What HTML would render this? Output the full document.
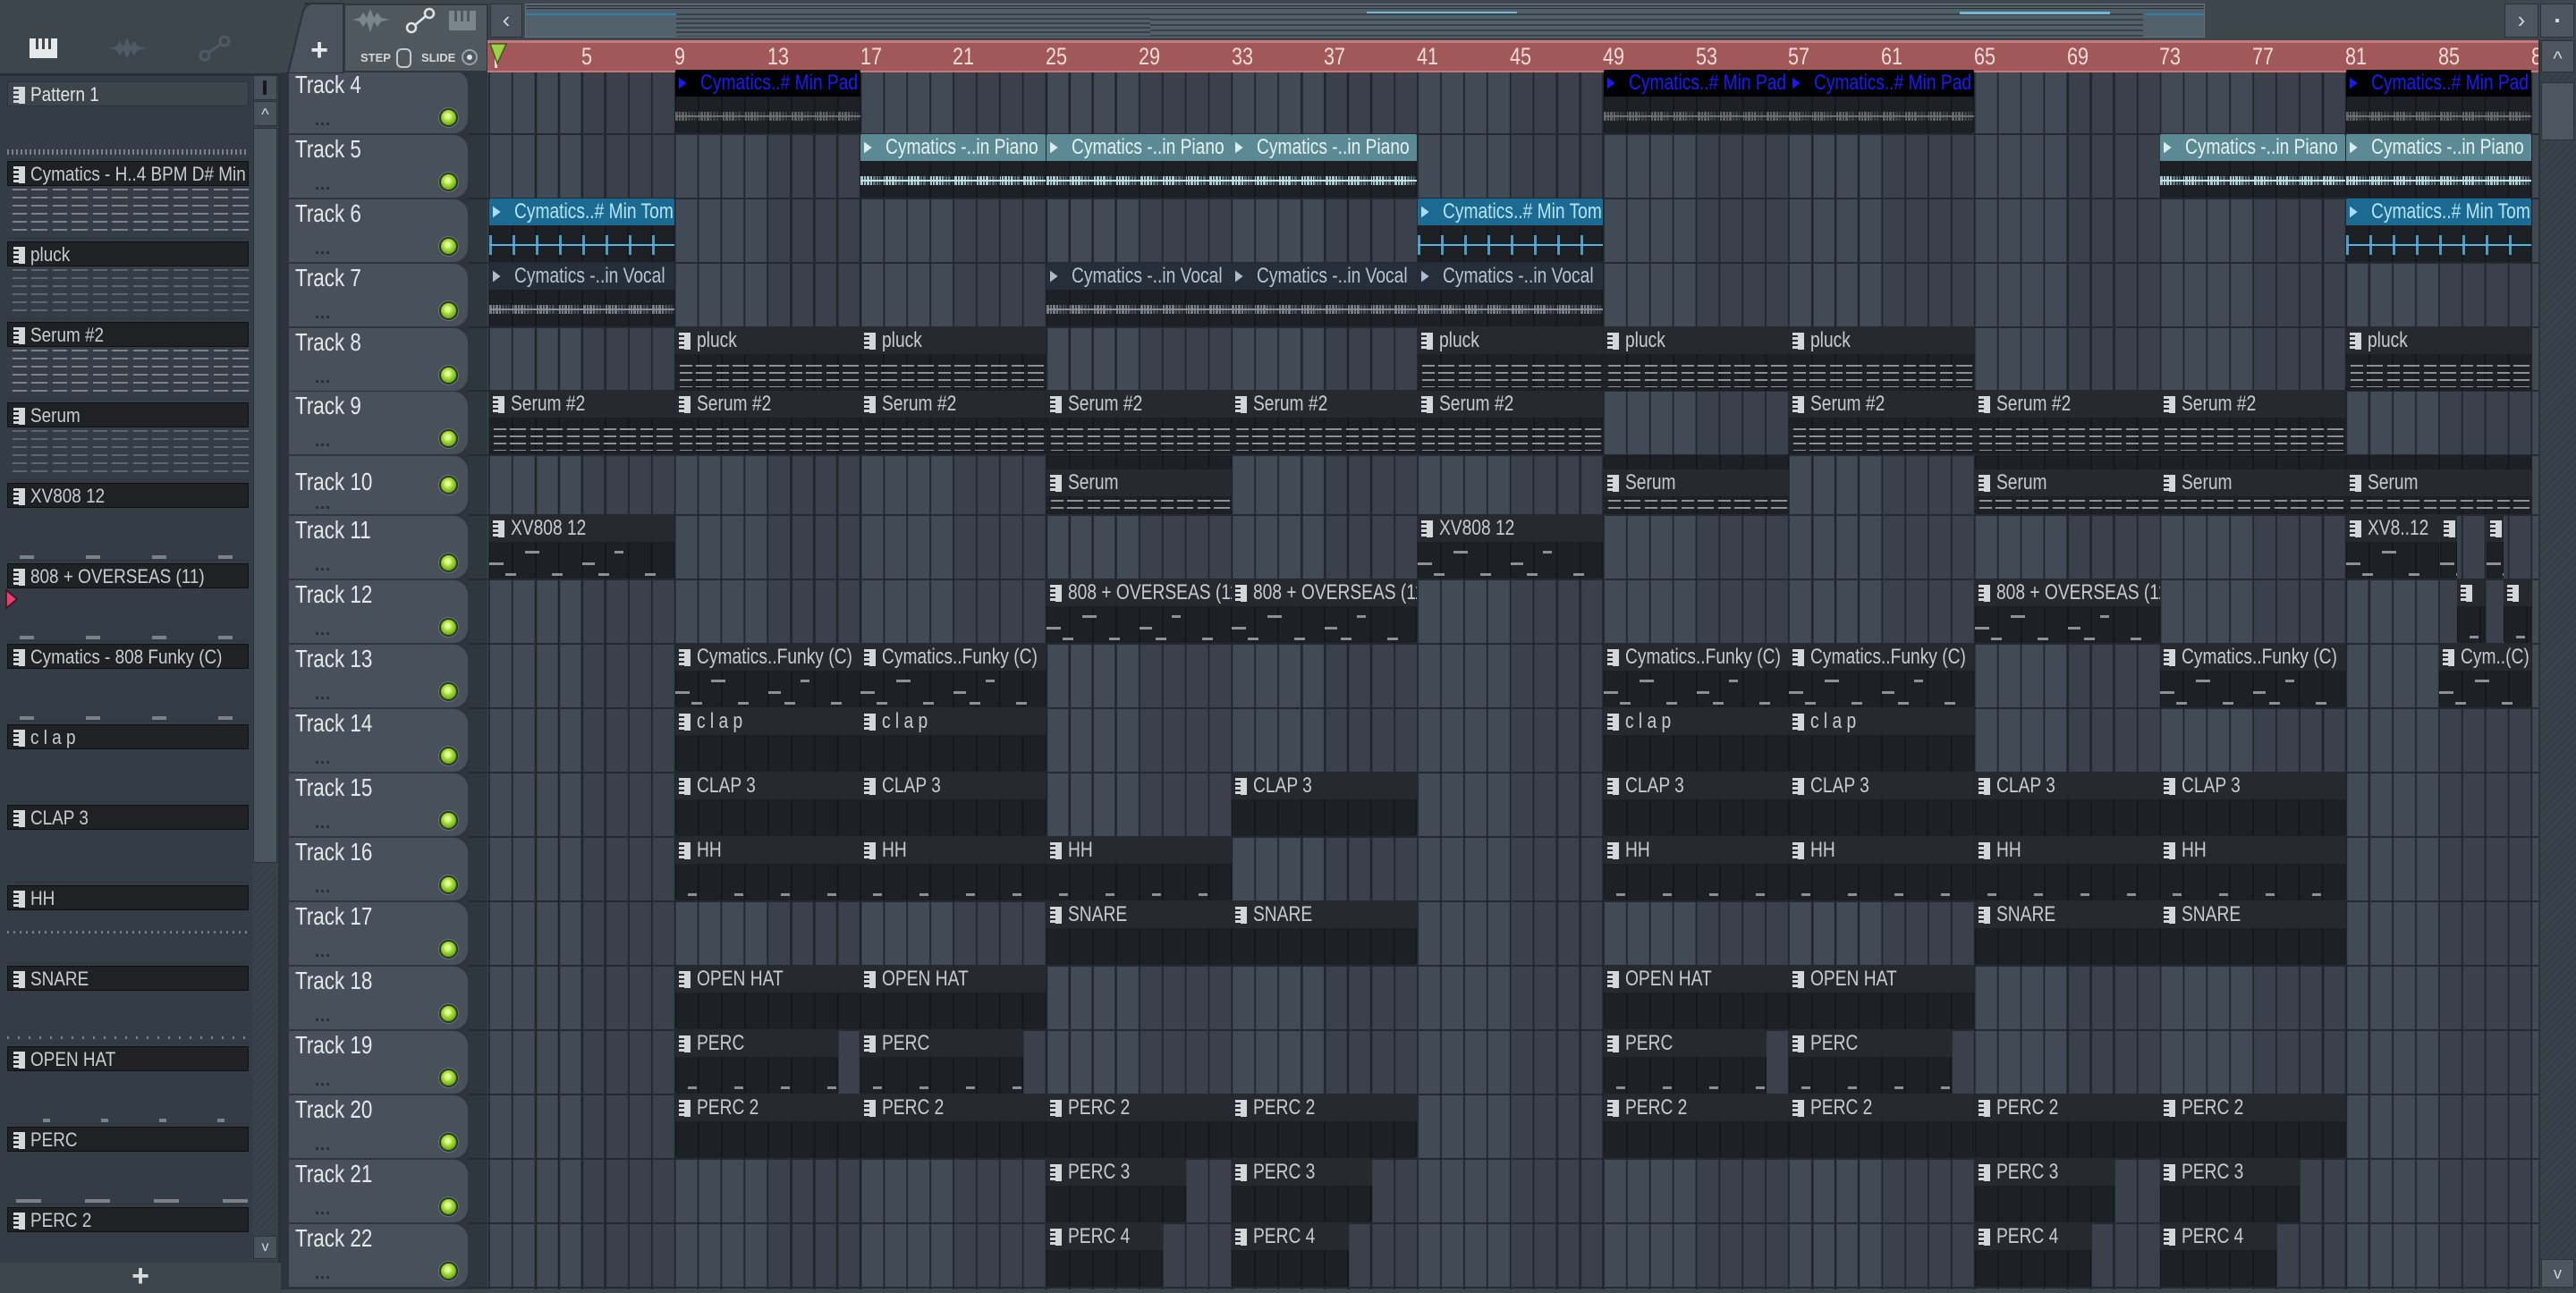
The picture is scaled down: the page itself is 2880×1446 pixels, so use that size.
<!DOCTYPE html>
<html><head><meta charset="utf-8">
<style>
*{box-sizing:border-box}
body{margin:0;width:2880px;height:1442px;background:#3e464d;overflow:hidden;position:relative;font-family:"Liberation Sans",sans-serif}
.a{position:absolute}
.t{display:inline-block;transform:scaleX(.8);transform-origin:0 50%;white-space:nowrap}
#grid{left:545px;top:81px;width:2293px;height:1361px;
background-image:repeating-linear-gradient(90deg,#20252b 0 2px,transparent 2px 25.95px),repeating-linear-gradient(90deg,#424a55 0 103.8px,#3a414b 103.8px 207.6px);
background-position:1px 0,2px 0}
.hl{position:absolute;left:523px;width:2315px;height:2px;background:#242a31}
.c{position:absolute;height:71px;overflow:hidden;border-radius:2px;background-color:#1d2025;
background-image:repeating-linear-gradient(90deg,#14171b 0 2px,transparent 2px 25.95px);background-position:-1px 0}
.c .h{position:relative;height:30px;background:#26292d;color:#c6cbd0;font-size:24px;line-height:30px;white-space:nowrap;padding-left:4px;z-index:2}
.c .h i{display:inline-block;width:13px;height:19px;vertical-align:-3px;margin-right:7px;
background:linear-gradient(90deg,transparent 0 6px,#d4d7da 6px),repeating-linear-gradient(#d4d7da 0 3px,transparent 3px 5px)}
.c .h b{display:inline-block;width:18px;height:16px;margin-right:6px;vertical-align:-1px;background:currentColor;clip-path:polygon(0 0,45% 50%,0 100%,0 60%,-1% 40%,0 0,100% 0,55% 50%,100% 100%,100% 0);
clip-path:polygon(0 10%,48% 50%,0 90%,0 55%,0 45%);opacity:.95}
.c .h b::after{content:""}
.dn::after{content:"";position:absolute;left:0;right:0;top:36px;bottom:4px;
background-image:repeating-linear-gradient(90deg,rgba(29,32,37,.95) 0 5px,transparent 5px 19px,rgba(29,32,37,.95) 19px 23px,transparent 23px 41px),repeating-linear-gradient(180deg,transparent 0 6px,#8d9094 6px 8px)}
.sp::after{content:"";position:absolute;left:0;right:0;bottom:5px;height:3px;
background-image:repeating-linear-gradient(90deg,transparent 0 14px,#8d9094 14px 24px,transparent 24px 52px)}
.sp2::after{content:"";position:absolute;left:0;right:0;top:40px;height:30px;
background:linear-gradient(90deg,transparent 0 40px,#8d9094 40px 56px,transparent 56px 140px,#8d9094 140px 150px,transparent 150px) 0 0/100% 3px no-repeat,
linear-gradient(90deg,#8d9094 0 16px,transparent 16px 104px,#8d9094 104px 118px,transparent 118px) 0 13px/100% 3px no-repeat,
repeating-linear-gradient(90deg,transparent 0 18px,#8d9094 18px 30px,transparent 30px 52px) 0 25px/100% 3px no-repeat}
.wv::after{content:"";position:absolute;left:0;right:0;top:47px;height:10px;opacity:.85;
background:repeating-linear-gradient(90deg,var(--w) 0 3px,transparent 3px 4px,var(--w) 4px 6px,transparent 6px 7px);
-webkit-mask:repeating-linear-gradient(90deg,#000 0 14px,rgba(0,0,0,.5) 14px 22px,rgba(0,0,0,.2) 22px 26px);}
.wv::before{content:"";position:absolute;left:0;right:0;top:51px;height:2px;background:var(--w)}
.pad .h{background:#000;color:#1a1aff}
.pad{--w:#6d6e70}
.pia .h{background:#5b8a95;color:#e4f2f4}
.pia{--w:#bfe3ea}
.tom .h{background:#1b6a92;color:#b4e2ff}
.tom{--w:#56b2e0}
.tom::after{height:22px;top:41px;background:repeating-linear-gradient(90deg,var(--w) 0 3px,transparent 3px 26px);-webkit-mask:none}
.voc .h{background:#262e39;color:#b6c3d0}
.voc{--w:#858d96}
.tr{position:absolute;left:323px;width:200px;height:70px;background:#48515a;border-radius:0 16px 16px 0;color:#e4e8ec;font-size:28px}
.tr .l{position:absolute;left:7px;top:0px}
.tr .led{position:absolute;left:168px;top:42px;width:21px;height:21px;border-radius:50%;background:radial-gradient(circle at 45% 40%,#e6ff9a 0 2px,#a8e03a 5px,#6aa81a 10px);border:2px solid #2a3a20;box-shadow:0 0 0 1px #6b7580}
.tr .d{position:absolute;left:30px;top:58px;width:16px;height:3px;background:repeating-linear-gradient(90deg,#2a3037 0 3px,transparent 3px 6px)}
.lp{position:absolute;left:8px;width:270px;height:28px;background:#1f2124;border:1px solid #0f1012;color:#c8ccd0;font-size:22px;line-height:27px;white-space:nowrap;overflow:hidden;padding-left:6px}
.lp .t{transform:scaleX(.86)}
.lp i{display:inline-block;width:13px;height:19px;vertical-align:-3px;margin-right:6px;background:linear-gradient(90deg,transparent 0 6px,#d4d7da 6px),repeating-linear-gradient(#d4d7da 0 3px,transparent 3px 5px)}
.pv{position:absolute;left:8px;width:270px;height:58px;border-bottom:1px solid #2c343c;
background-image:repeating-linear-gradient(90deg,transparent 0 14px,#7d8186 14px 30px,transparent 30px 74px);background-size:100% 4px;background-repeat:no-repeat;background-position:0 52px}
.pvd{background-image:repeating-linear-gradient(90deg,rgba(52,60,69,.95) 0 6px,transparent 6px 22px,rgba(52,60,69,.95) 22px 27px,transparent 27px 45px),repeating-linear-gradient(180deg,transparent 0 7px,#7d8186 7px 9px)!important;background-size:auto!important;background-repeat:repeat!important}
.rn{position:absolute;top:44px;color:#f4dad4;font-size:27px;line-height:38px}
</style></head><body>

<!-- left panel -->
<div class="a" style="left:0;top:82px;width:314px;height:1330px;background:#343c45;border-top:3px solid #283037;border-right:3px solid #283037"></div>
<div class="a" style="left:0;top:1412px;width:314px;height:30px;background:#3e464d;color:#d8dcdf;font-size:34px;line-height:30px;text-align:center;font-weight:bold">+</div>
<!-- top-left icons -->
<div class="a" style="left:33px;top:43px;width:31px;height:22px;background:#e6e8ea"></div>
<div class="a" style="left:40px;top:43px;width:3px;height:12px;background:#3e464d"></div>
<div class="a" style="left:47px;top:43px;width:3px;height:12px;background:#3e464d"></div>
<div class="a" style="left:54px;top:43px;width:3px;height:12px;background:#3e464d"></div>
<svg class="a" style="left:120px;top:38px" width="46" height="32"><path d="M2 16 L10 14 L14 8 L18 14 L22 4 L26 14 L30 8 L34 14 L44 16 L34 18 L30 24 L26 18 L22 28 L18 18 L14 24 L10 18 Z" fill="#4f5a62"/></svg>
<svg class="a" style="left:220px;top:38px" width="40" height="32"><circle cx="9" cy="24" r="5" fill="none" stroke="#4f5a62" stroke-width="3"/><circle cx="31" cy="8" r="5" fill="none" stroke="#4f5a62" stroke-width="3"/><line x1="13" y1="21" x2="27" y2="11" stroke="#4f5a62" stroke-width="3"/></svg>

<!-- pattern list -->
<div class="lp" style="top:91px;background:#3c444c;border-color:#2c333a;color:#e0e4e8"><i></i><span class="t">Pattern 1</span></div>
<div class="pv" style="top:120px;background-image:repeating-linear-gradient(90deg,#7d8186 0 2px,transparent 2px 5px);background-size:100% 6px;background-position:0 47px"></div>
<div class="lp" style="top:180px"><i></i><span class="t">Cymatics - H..4 BPM D# Min</span></div>
<div class="pv pvd" style="top:209px"></div>
<div class="lp" style="top:270px"><i></i><span class="t">pluck</span></div>
<div class="pv pvd" style="top:299px;opacity:.6"></div>
<div class="lp" style="top:360px"><i></i><span class="t">Serum #2</span></div>
<div class="pv pvd" style="top:389px"></div>
<div class="lp" style="top:450px"><i></i><span class="t">Serum</span></div>
<div class="pv pvd" style="top:479px;opacity:.6"></div>
<div class="lp" style="top:540px"><i></i><span class="t">XV808 12</span></div>
<div class="pv" style="top:569px"></div>
<div class="lp" style="top:630px"><i></i><span class="t">808 + OVERSEAS (11)</span></div>
<div class="pv" style="top:659px"></div>
<svg class="a" style="left:5px;top:658px" width="16" height="24"><path d="M2 2 L14 12 L2 22 Z" fill="#e8406a" stroke="#3a1020" stroke-width="1.5"/></svg>
<div class="lp" style="top:720px"><i></i><span class="t">Cymatics - 808 Funky (C)</span></div>
<div class="pv" style="top:749px"></div>
<div class="lp" style="top:810px"><i></i><span class="t">c l a p</span></div>
<div class="pv" style="top:839px;background-position:0 200px"></div>
<div class="lp" style="top:900px"><i></i><span class="t">CLAP 3</span></div>
<div class="pv" style="top:929px;background-position:0 200px"></div>
<div class="lp" style="top:990px"><i></i><span class="t">HH</span></div>
<div class="pv" style="top:1019px;background-image:repeating-linear-gradient(90deg,#7d8186 0 2px,transparent 2px 7px);background-size:100% 3px;background-position:0 22px"></div>
<div class="lp" style="top:1080px"><i></i><span class="t">SNARE</span></div>
<div class="pv" style="top:1109px;background-image:repeating-linear-gradient(90deg,#7d8186 0 2px,transparent 2px 12px);background-size:100% 3px;background-position:0 50px"></div>
<div class="lp" style="top:1170px"><i></i><span class="t">OPEN HAT</span></div>
<div class="pv" style="top:1199px;background-image:repeating-linear-gradient(90deg,transparent 0 40px,#7d8186 40px 48px,transparent 48px 65px)"></div>
<div class="lp" style="top:1260px"><i></i><span class="t">PERC</span></div>
<div class="pv" style="top:1289px;background-image:repeating-linear-gradient(90deg,transparent 0 10px,#7d8186 10px 38px,transparent 38px 77px)"></div>
<div class="lp" style="top:1350px"><i></i><span class="t">PERC 2</span></div>

<!-- left scrollbar -->
<div class="a" style="left:282px;top:85px;width:29px;height:1325px;background:repeating-linear-gradient(135deg,#3a434b 0 3px,#363e46 3px 6px)"></div>
<div class="a" style="left:283px;top:84px;width:27px;height:28px;background:#48525b;border:1px solid #2a3138"></div>
<div class="a" style="left:294px;top:90px;width:4px;height:16px;background:#15181b"></div>
<div class="a" style="left:283px;top:113px;width:27px;height:28px;background:#48525b;border:1px solid #2a3138;color:#cfd3d6;font-size:18px;text-align:center;line-height:28px">^</div>
<div class="a" style="left:283px;top:143px;width:27px;height:822px;background:#4b555e;border:1px solid #2a3138"></div>
<div class="a" style="left:283px;top:1382px;width:27px;height:26px;background:#48525b;border:1px solid #2a3138;color:#cfd3d6;font-size:16px;text-align:center;line-height:24px">v</div>

<!-- track header column background -->
<div class="a" style="left:314px;top:81px;width:231px;height:1361px;background:#2d343b"></div>
<div class="a" style="left:523px;top:81px;width:22px;height:1361px;background:#2f373e"></div>

<!-- grid -->
<div id="grid" class="a"></div>

<!-- row lines -->
<div class="hl" style="top:149px"></div><div class="hl" style="top:221px"></div><div class="hl" style="top:293px"></div>
<div class="hl" style="top:365px"></div><div class="hl" style="top:436px"></div><div class="hl" style="top:508px"></div>
<div class="hl" style="top:575px"></div><div class="hl" style="top:647px"></div><div class="hl" style="top:719px"></div>
<div class="hl" style="top:791px"></div><div class="hl" style="top:863px"></div><div class="hl" style="top:935px"></div>
<div class="hl" style="top:1007px"></div><div class="hl" style="top:1079px"></div><div class="hl" style="top:1151px"></div>
<div class="hl" style="top:1223px"></div><div class="hl" style="top:1295px"></div><div class="hl" style="top:1367px"></div>
<div class="hl" style="top:1439px"></div>

<!-- track headers -->
<div class="tr" style="top:79px"><span class="l t">Track 4</span><div class="d"></div><div class="led"></div></div>
<div class="tr" style="top:151px"><span class="l t">Track 5</span><div class="d"></div><div class="led"></div></div>
<div class="tr" style="top:223px"><span class="l t">Track 6</span><div class="d"></div><div class="led"></div></div>
<div class="tr" style="top:295px"><span class="l t">Track 7</span><div class="d"></div><div class="led"></div></div>
<div class="tr" style="top:367px"><span class="l t">Track 8</span><div class="d"></div><div class="led"></div></div>
<div class="tr" style="top:438px"><span class="l t">Track 9</span><div class="d"></div><div class="led"></div></div>
<div class="tr" style="top:510px;height:65px"><span class="l t" style="top:13px">Track 10</span><div class="d" style="top:56px"></div><div class="led" style="top:22px"></div></div>
<div class="tr" style="top:577px"><span class="l t">Track 11</span><div class="d"></div><div class="led"></div></div>
<div class="tr" style="top:649px"><span class="l t">Track 12</span><div class="d"></div><div class="led"></div></div>
<div class="tr" style="top:721px"><span class="l t">Track 13</span><div class="d"></div><div class="led"></div></div>
<div class="tr" style="top:793px"><span class="l t">Track 14</span><div class="d"></div><div class="led"></div></div>
<div class="tr" style="top:865px"><span class="l t">Track 15</span><div class="d"></div><div class="led"></div></div>
<div class="tr" style="top:937px"><span class="l t">Track 16</span><div class="d"></div><div class="led"></div></div>
<div class="tr" style="top:1009px"><span class="l t">Track 17</span><div class="d"></div><div class="led"></div></div>
<div class="tr" style="top:1081px"><span class="l t">Track 18</span><div class="d"></div><div class="led"></div></div>
<div class="tr" style="top:1153px"><span class="l t">Track 19</span><div class="d"></div><div class="led"></div></div>
<div class="tr" style="top:1225px"><span class="l t">Track 20</span><div class="d"></div><div class="led"></div></div>
<div class="tr" style="top:1297px"><span class="l t">Track 21</span><div class="d"></div><div class="led"></div></div>
<div class="tr" style="top:1369px"><span class="l t">Track 22</span><div class="d"></div><div class="led"></div></div>

<!-- CLIPS -->
<div class="c pad wv" style="left:755px;top:78px;width:207px"><div class="h"><b></b><span class="t">Cymatics..# Min Pad</span></div></div>
<div class="c pad wv" style="left:1793px;top:78px;width:207px"><div class="h"><b></b><span class="t">Cymatics..# Min Pad</span></div></div>
<div class="c pad wv" style="left:2000px;top:78px;width:207px"><div class="h"><b></b><span class="t">Cymatics..# Min Pad</span></div></div>
<div class="c pad wv" style="left:2623px;top:78px;width:207px"><div class="h"><b></b><span class="t">Cymatics..# Min Pad</span></div></div>
<div class="c pia wv" style="left:962px;top:150px;width:207px"><div class="h"><b></b><span class="t">Cymatics -..in Piano</span></div></div>
<div class="c pia wv" style="left:1170px;top:150px;width:207px"><div class="h"><b></b><span class="t">Cymatics -..in Piano</span></div></div>
<div class="c pia wv" style="left:1377px;top:150px;width:207px"><div class="h"><b></b><span class="t">Cymatics -..in Piano</span></div></div>
<div class="c pia wv" style="left:2415px;top:150px;width:207px"><div class="h"><b></b><span class="t">Cymatics -..in Piano</span></div></div>
<div class="c pia wv" style="left:2623px;top:150px;width:207px"><div class="h"><b></b><span class="t">Cymatics -..in Piano</span></div></div>
<div class="c tom wv" style="left:547px;top:222px;width:207px"><div class="h"><b></b><span class="t">Cymatics..# Min Tom</span></div></div>
<div class="c tom wv" style="left:1585px;top:222px;width:207px"><div class="h"><b></b><span class="t">Cymatics..# Min Tom</span></div></div>
<div class="c tom wv" style="left:2623px;top:222px;width:207px"><div class="h"><b></b><span class="t">Cymatics..# Min Tom</span></div></div>
<div class="c voc wv" style="left:547px;top:294px;width:207px"><div class="h"><b></b><span class="t">Cymatics -..in Vocal</span></div></div>
<div class="c voc wv" style="left:1170px;top:294px;width:207px"><div class="h"><b></b><span class="t">Cymatics -..in Vocal</span></div></div>
<div class="c voc wv" style="left:1377px;top:294px;width:207px"><div class="h"><b></b><span class="t">Cymatics -..in Vocal</span></div></div>
<div class="c voc wv" style="left:1585px;top:294px;width:207px"><div class="h"><b></b><span class="t">Cymatics -..in Vocal</span></div></div>
<div class="c dn" style="left:755px;top:366px;width:207px"><div class="h"><i></i><span class="t">pluck</span></div></div>
<div class="c dn" style="left:962px;top:366px;width:207px"><div class="h"><i></i><span class="t">pluck</span></div></div>
<div class="c dn" style="left:1585px;top:366px;width:207px"><div class="h"><i></i><span class="t">pluck</span></div></div>
<div class="c dn" style="left:1793px;top:366px;width:207px"><div class="h"><i></i><span class="t">pluck</span></div></div>
<div class="c dn" style="left:2000px;top:366px;width:207px"><div class="h"><i></i><span class="t">pluck</span></div></div>
<div class="c dn" style="left:2623px;top:366px;width:207px"><div class="h"><i></i><span class="t">pluck</span></div></div>
<div class="c dn" style="left:547px;top:437px;width:207px"><div class="h"><i></i><span class="t">Serum #2</span></div></div>
<div class="c dn" style="left:755px;top:437px;width:207px"><div class="h"><i></i><span class="t">Serum #2</span></div></div>
<div class="c dn" style="left:962px;top:437px;width:207px"><div class="h"><i></i><span class="t">Serum #2</span></div></div>
<div class="c dn" style="left:1170px;top:437px;width:207px"><div class="h"><i></i><span class="t">Serum #2</span></div></div>
<div class="c dn" style="left:1377px;top:437px;width:207px"><div class="h"><i></i><span class="t">Serum #2</span></div></div>
<div class="c dn" style="left:1585px;top:437px;width:207px"><div class="h"><i></i><span class="t">Serum #2</span></div></div>
<div class="c dn" style="left:2000px;top:437px;width:207px"><div class="h"><i></i><span class="t">Serum #2</span></div></div>
<div class="c dn" style="left:2208px;top:437px;width:207px"><div class="h"><i></i><span class="t">Serum #2</span></div></div>
<div class="c dn" style="left:2415px;top:437px;width:207px"><div class="h"><i></i><span class="t">Serum #2</span></div></div>
<div class="c dn" style="left:1170px;top:509px;width:207px;height:66px"><div class="h" style="top:16px"><i></i><span class="t">Serum</span></div></div>
<div class="c dn" style="left:1793px;top:509px;width:207px;height:66px"><div class="h" style="top:16px"><i></i><span class="t">Serum</span></div></div>
<div class="c dn" style="left:2208px;top:509px;width:207px;height:66px"><div class="h" style="top:16px"><i></i><span class="t">Serum</span></div></div>
<div class="c dn" style="left:2415px;top:509px;width:207px;height:66px"><div class="h" style="top:16px"><i></i><span class="t">Serum</span></div></div>
<div class="c dn" style="left:2623px;top:509px;width:207px;height:66px"><div class="h" style="top:16px"><i></i><span class="t">Serum</span></div></div>
<div class="c sp2" style="left:547px;top:576px;width:207px"><div class="h"><i></i><span class="t">XV808 12</span></div></div>
<div class="c sp2" style="left:1585px;top:576px;width:207px"><div class="h"><i></i><span class="t">XV808 12</span></div></div>
<div class="c sp2" style="left:2623px;top:576px;width:104px"><div class="h"><i></i><span class="t">XV8..12</span></div></div>
<div class="c sp2" style="left:2728px;top:576px;width:19px"><div class="h"><i></i></div></div>
<div class="c sp2" style="left:2780px;top:576px;width:19px"><div class="h"><i></i></div></div>
<div class="c sp2" style="left:1170px;top:648px;width:207px"><div class="h"><i></i><span class="t">808 + OVERSEAS (11)</span></div></div>
<div class="c sp2" style="left:1377px;top:648px;width:207px"><div class="h"><i></i><span class="t">808 + OVERSEAS (11)</span></div></div>
<div class="c sp2" style="left:2208px;top:648px;width:207px"><div class="h"><i></i><span class="t">808 + OVERSEAS (11)</span></div></div>
<div class="c sp" style="left:2747px;top:648px;width:31px"><div class="h"><i></i></div></div>
<div class="c sp" style="left:2799px;top:648px;width:31px"><div class="h"><i></i></div></div>
<div class="c sp2" style="left:755px;top:720px;width:207px"><div class="h"><i></i><span class="t">Cymatics..Funky (C)</span></div></div>
<div class="c sp2" style="left:962px;top:720px;width:207px"><div class="h"><i></i><span class="t">Cymatics..Funky (C)</span></div></div>
<div class="c sp2" style="left:1793px;top:720px;width:207px"><div class="h"><i></i><span class="t">Cymatics..Funky (C)</span></div></div>
<div class="c sp2" style="left:2000px;top:720px;width:207px"><div class="h"><i></i><span class="t">Cymatics..Funky (C)</span></div></div>
<div class="c sp2" style="left:2415px;top:720px;width:207px"><div class="h"><i></i><span class="t">Cymatics..Funky (C)</span></div></div>
<div class="c sp2" style="left:2727px;top:720px;width:103px"><div class="h"><i></i><span class="t">Cym..(C)</span></div></div>
<div class="c" style="left:755px;top:792px;width:207px"><div class="h"><i></i><span class="t">c l a p</span></div></div>
<div class="c" style="left:962px;top:792px;width:207px"><div class="h"><i></i><span class="t">c l a p</span></div></div>
<div class="c" style="left:1793px;top:792px;width:207px"><div class="h"><i></i><span class="t">c l a p</span></div></div>
<div class="c" style="left:2000px;top:792px;width:207px"><div class="h"><i></i><span class="t">c l a p</span></div></div>
<div class="c" style="left:755px;top:864px;width:207px"><div class="h"><i></i><span class="t">CLAP 3</span></div></div>
<div class="c" style="left:962px;top:864px;width:207px"><div class="h"><i></i><span class="t">CLAP 3</span></div></div>
<div class="c" style="left:1377px;top:864px;width:207px"><div class="h"><i></i><span class="t">CLAP 3</span></div></div>
<div class="c" style="left:1793px;top:864px;width:207px"><div class="h"><i></i><span class="t">CLAP 3</span></div></div>
<div class="c" style="left:2000px;top:864px;width:207px"><div class="h"><i></i><span class="t">CLAP 3</span></div></div>
<div class="c" style="left:2208px;top:864px;width:207px"><div class="h"><i></i><span class="t">CLAP 3</span></div></div>
<div class="c" style="left:2415px;top:864px;width:207px"><div class="h"><i></i><span class="t">CLAP 3</span></div></div>
<div class="c sp" style="left:755px;top:936px;width:207px"><div class="h"><i></i><span class="t">HH</span></div></div>
<div class="c sp" style="left:962px;top:936px;width:207px"><div class="h"><i></i><span class="t">HH</span></div></div>
<div class="c sp" style="left:1170px;top:936px;width:207px"><div class="h"><i></i><span class="t">HH</span></div></div>
<div class="c sp" style="left:1793px;top:936px;width:207px"><div class="h"><i></i><span class="t">HH</span></div></div>
<div class="c sp" style="left:2000px;top:936px;width:207px"><div class="h"><i></i><span class="t">HH</span></div></div>
<div class="c sp" style="left:2208px;top:936px;width:207px"><div class="h"><i></i><span class="t">HH</span></div></div>
<div class="c sp" style="left:2415px;top:936px;width:207px"><div class="h"><i></i><span class="t">HH</span></div></div>
<div class="c" style="left:1170px;top:1008px;width:207px"><div class="h"><i></i><span class="t">SNARE</span></div></div>
<div class="c" style="left:1377px;top:1008px;width:207px"><div class="h"><i></i><span class="t">SNARE</span></div></div>
<div class="c" style="left:2208px;top:1008px;width:207px"><div class="h"><i></i><span class="t">SNARE</span></div></div>
<div class="c" style="left:2415px;top:1008px;width:207px"><div class="h"><i></i><span class="t">SNARE</span></div></div>
<div class="c" style="left:755px;top:1080px;width:207px"><div class="h"><i></i><span class="t">OPEN HAT</span></div></div>
<div class="c" style="left:962px;top:1080px;width:207px"><div class="h"><i></i><span class="t">OPEN HAT</span></div></div>
<div class="c" style="left:1793px;top:1080px;width:207px"><div class="h"><i></i><span class="t">OPEN HAT</span></div></div>
<div class="c" style="left:2000px;top:1080px;width:207px"><div class="h"><i></i><span class="t">OPEN HAT</span></div></div>
<div class="c sp" style="left:755px;top:1152px;width:182px"><div class="h"><i></i><span class="t">PERC</span></div></div>
<div class="c sp" style="left:962px;top:1152px;width:182px"><div class="h"><i></i><span class="t">PERC</span></div></div>
<div class="c sp" style="left:1793px;top:1152px;width:182px"><div class="h"><i></i><span class="t">PERC</span></div></div>
<div class="c sp" style="left:2000px;top:1152px;width:182px"><div class="h"><i></i><span class="t">PERC</span></div></div>
<div class="c" style="left:755px;top:1224px;width:207px"><div class="h"><i></i><span class="t">PERC 2</span></div></div>
<div class="c" style="left:962px;top:1224px;width:207px"><div class="h"><i></i><span class="t">PERC 2</span></div></div>
<div class="c" style="left:1170px;top:1224px;width:207px"><div class="h"><i></i><span class="t">PERC 2</span></div></div>
<div class="c" style="left:1377px;top:1224px;width:207px"><div class="h"><i></i><span class="t">PERC 2</span></div></div>
<div class="c" style="left:1793px;top:1224px;width:207px"><div class="h"><i></i><span class="t">PERC 2</span></div></div>
<div class="c" style="left:2000px;top:1224px;width:207px"><div class="h"><i></i><span class="t">PERC 2</span></div></div>
<div class="c" style="left:2208px;top:1224px;width:207px"><div class="h"><i></i><span class="t">PERC 2</span></div></div>
<div class="c" style="left:2415px;top:1224px;width:207px"><div class="h"><i></i><span class="t">PERC 2</span></div></div>
<div class="c" style="left:1170px;top:1296px;width:156px"><div class="h"><i></i><span class="t">PERC 3</span></div></div>
<div class="c" style="left:1377px;top:1296px;width:157px"><div class="h"><i></i><span class="t">PERC 3</span></div></div>
<div class="c" style="left:2208px;top:1296px;width:156px"><div class="h"><i></i><span class="t">PERC 3</span></div></div>
<div class="c" style="left:2415px;top:1296px;width:156px"><div class="h"><i></i><span class="t">PERC 3</span></div></div>
<div class="c" style="left:1170px;top:1368px;width:130px"><div class="h"><i></i><span class="t">PERC 4</span></div></div>
<div class="c" style="left:1377px;top:1368px;width:131px"><div class="h"><i></i><span class="t">PERC 4</span></div></div>
<div class="c" style="left:2208px;top:1368px;width:130px"><div class="h"><i></i><span class="t">PERC 4</span></div></div>
<div class="c" style="left:2415px;top:1368px;width:130px"><div class="h"><i></i><span class="t">PERC 4</span></div></div>

<!-- top toolbar above grid -->
<div class="a" style="left:314px;top:0;width:2566px;height:81px;background:#3e464d"></div>
<svg class="a" style="left:318px;top:2px" width="70" height="80"><path d="M22 2 H66 V80 H4 L20 14 Q22 4 30 2 Z" fill="#4a535b" stroke="#2b3238" stroke-width="2"/></svg>
<div class="a" style="left:340px;top:36px;width:34px;color:#e6e9eb;font-size:34px;font-weight:bold;text-align:center;line-height:40px">+</div>
<div class="a" style="left:384px;top:4px;width:162px;height:77px;background:#4f585f;border:2px solid #2f363c"></div>
<svg class="a" style="left:392px;top:8px" width="46" height="30"><path d="M2 14 L10 12 L14 6 L18 12 L22 2 L26 12 L30 6 L34 12 L44 14 L34 16 L30 22 L26 16 L22 28 L18 16 L14 22 L10 16 Z" fill="#7b858c"/></svg>
<svg class="a" style="left:450px;top:8px" width="40" height="30"><circle cx="10" cy="23" r="5" fill="none" stroke="#dfe3e6" stroke-width="2.5"/><circle cx="30" cy="7" r="5" fill="none" stroke="#dfe3e6" stroke-width="2.5"/><line x1="14" y1="20" x2="26" y2="10" stroke="#dfe3e6" stroke-width="2.5"/></svg>
<div class="a" style="left:502px;top:12px;width:30px;height:22px;background:#7b858c"></div>
<div class="a" style="left:508px;top:12px;width:3px;height:12px;background:#4f585f"></div>
<div class="a" style="left:515px;top:12px;width:3px;height:12px;background:#4f585f"></div>
<div class="a" style="left:522px;top:12px;width:3px;height:12px;background:#4f585f"></div>
<div class="a" style="left:403px;top:55px;color:#d4d8db;font-size:13px;font-weight:bold;line-height:20px">STEP</div>
<div class="a" style="left:443px;top:54px;width:17px;height:22px;border:2px solid #c4c9cd;border-radius:6px"></div>
<div class="a" style="left:471px;top:55px;color:#d4d8db;font-size:13px;font-weight:bold;line-height:20px">SLIDE</div>
<div class="a" style="left:516px;top:55px;width:18px;height:18px;border:2px solid #9aa1a6;border-radius:50%"></div>
<div class="a" style="left:522px;top:61px;width:6px;height:6px;background:#dfe3e6;border-radius:50%"></div>

<div class="a" style="left:548px;top:4px;width:36px;height:38px;background:#4a535b;border:1px solid #2b3238;color:#cfd3d6;font-size:26px;text-align:center;line-height:34px">&lsaquo;</div>
<div class="a" style="left:587px;top:4px;width:1878px;height:38px;background:#52606a;border:1px solid #65727b;overflow:hidden">
<div class="a" style="left:0;top:1px;width:1878px;height:5px;background:repeating-linear-gradient(#2a3036 0 1px,transparent 1px 3px)"></div>
<div class="a" style="left:0;top:10px;width:168px;height:2px;background:#2f7fb8"></div>
<div class="a" style="left:168px;top:10px;width:530px;height:26px;background:repeating-linear-gradient(#3a4047 0 2px,transparent 2px 5px)"></div>
<div class="a" style="left:698px;top:10px;width:1110px;height:26px;background:repeating-linear-gradient(#3a4047 0 2px,transparent 2px 6px)"></div>
<div class="a" style="left:940px;top:8px;width:168px;height:2px;background:#6fb8d8"></div>
<div class="a" style="left:1603px;top:8px;width:168px;height:3px;background:#6fb8d8"></div>
<div class="a" style="left:1810px;top:10px;width:68px;height:2px;background:#2f7fb8"></div>
</div>
<div class="a" style="left:545px;top:45px;width:2293px;height:36px;background:#a0585b;border-top:3px solid #c47a7c;border-bottom:2px solid #c47a7c;overflow:hidden">
<div class="rn t" style="left:105px;top:-4px">5</div><div class="rn t" style="left:209px;top:-4px">9</div><div class="rn t" style="left:313px;top:-4px">13</div>
<div class="rn t" style="left:417px;top:-4px">17</div><div class="rn t" style="left:520px;top:-4px">21</div><div class="rn t" style="left:624px;top:-4px">25</div>
<div class="rn t" style="left:728px;top:-4px">29</div><div class="rn t" style="left:832px;top:-4px">33</div><div class="rn t" style="left:935px;top:-4px">37</div>
<div class="rn t" style="left:1039px;top:-4px">41</div><div class="rn t" style="left:1143px;top:-4px">45</div><div class="rn t" style="left:1247px;top:-4px">49</div>
<div class="rn t" style="left:1351px;top:-4px">53</div><div class="rn t" style="left:1454px;top:-4px">57</div><div class="rn t" style="left:1558px;top:-4px">61</div>
<div class="rn t" style="left:1662px;top:-4px">65</div><div class="rn t" style="left:1766px;top:-4px">69</div><div class="rn t" style="left:1869px;top:-4px">73</div>
<div class="rn t" style="left:1973px;top:-4px">77</div><div class="rn t" style="left:2077px;top:-4px">81</div><div class="rn t" style="left:2181px;top:-4px">85</div>
<div class="rn t" style="left:2285px;top:-4px">89</div>
</div>
<div class="a" style="left:553px;top:54px;width:3px;height:22px;background:#f4dad4"></div>
<svg class="a" style="left:546px;top:47px" width="22" height="26"><path d="M2 2 H20 L10 24 Z" fill="#9ed04a" stroke="#3f5a18" stroke-width="1.5"/></svg>

<div class="a" style="left:2800px;top:4px;width:38px;height:38px;background:#4d565e;border:1px solid #2b3238;color:#cfd3d6;font-size:26px;text-align:center;line-height:34px">&rsaquo;</div>
<div class="a" style="left:2840px;top:4px;width:38px;height:38px;background:#4d565e;border:1px solid #2b3238"></div>
<div class="a" style="left:2857px;top:21px;width:4px;height:4px;background:#d4d8db"></div>
<div class="a" style="left:2838px;top:44px;width:42px;height:1398px;background:repeating-linear-gradient(135deg,#3a434b 0 3px,#353d45 3px 6px);border-left:2px solid #2b3238"></div>
<div class="a" style="left:2841px;top:45px;width:37px;height:36px;background:#4d565e;border:1px solid #2b3238;color:#cfd3d6;font-size:22px;text-align:center;line-height:40px">^</div>
<div class="a" style="left:2841px;top:92px;width:37px;height:65px;background:#4d565e;border:1px solid #2b3238"></div>
<div class="a" style="left:2841px;top:1408px;width:37px;height:32px;background:#4d565e;border:1px solid #2b3238;color:#cfd3d6;font-size:18px;text-align:center;line-height:30px">v</div>
</body></html>
